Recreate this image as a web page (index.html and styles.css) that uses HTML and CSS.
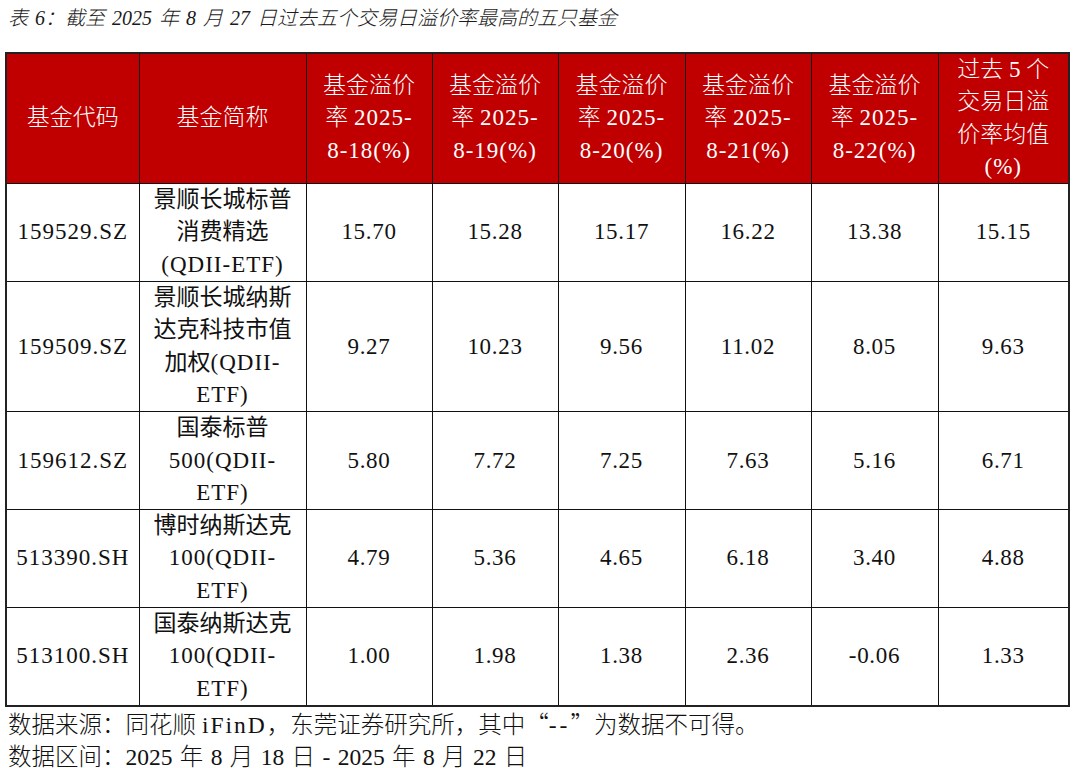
FILE: index.html
```html
<!DOCTYPE html>
<html lang="zh-CN">
<head>
<meta charset="utf-8">
<title>表 6</title>
<link rel="stylesheet" href="styles.css">
</head>
<body>
<div class="page">
  <div class="caption">表 6：截至 2025 年 8 月 27 日过去五个交易日溢价率最高的五只基金</div>
  <table class="fund-table">
    <colgroup>
      <col class="c-code">
      <col class="c-name">
      <col class="c-d1">
      <col class="c-d2">
      <col class="c-d3">
      <col class="c-d4">
      <col class="c-d5">
      <col class="c-avg">
    </colgroup>
    <thead>
      <tr>
        <th>基金代码</th>
        <th>基金简称</th>
        <th>基金溢价<br>率 <span class="lat">2025-</span><br><span class="lat">8-18(%)</span></th>
        <th>基金溢价<br>率 <span class="lat">2025-</span><br><span class="lat">8-19(%)</span></th>
        <th>基金溢价<br>率 <span class="lat">2025-</span><br><span class="lat">8-20(%)</span></th>
        <th>基金溢价<br>率 <span class="lat">2025-</span><br><span class="lat">8-21(%)</span></th>
        <th>基金溢价<br>率 <span class="lat">2025-</span><br><span class="lat">8-22(%)</span></th>
        <th>过去 5 个<br>交易日溢<br>价率均值<br><span class="lat">(%)</span></th>
      </tr>
    </thead>
    <tbody>
      <tr>
        <td class="code">159529.SZ</td>
        <td>景顺长城标普<br>消费精选<br><span class="lat">(QDII-ETF)</span></td>
        <td class="num">15.70</td>
        <td class="num">15.28</td>
        <td class="num">15.17</td>
        <td class="num">16.22</td>
        <td class="num">13.38</td>
        <td class="num">15.15</td>
      </tr>
      <tr>
        <td class="code">159509.SZ</td>
        <td>景顺长城纳斯<br>达克科技市值<br>加权<span class="lat">(QDII-</span><br><span class="lat">ETF)</span></td>
        <td class="num">9.27</td>
        <td class="num">10.23</td>
        <td class="num">9.56</td>
        <td class="num">11.02</td>
        <td class="num">8.05</td>
        <td class="num">9.63</td>
      </tr>
      <tr>
        <td class="code">159612.SZ</td>
        <td>国泰标普<br><span class="lat">500(QDII-</span><br><span class="lat">ETF)</span></td>
        <td class="num">5.80</td>
        <td class="num">7.72</td>
        <td class="num">7.25</td>
        <td class="num">7.63</td>
        <td class="num">5.16</td>
        <td class="num">6.71</td>
      </tr>
      <tr>
        <td class="code">513390.SH</td>
        <td>博时纳斯达克<br><span class="lat">100(QDII-</span><br><span class="lat">ETF)</span></td>
        <td class="num">4.79</td>
        <td class="num">5.36</td>
        <td class="num">4.65</td>
        <td class="num">6.18</td>
        <td class="num">3.40</td>
        <td class="num">4.88</td>
      </tr>
      <tr>
        <td class="code">513100.SH</td>
        <td>国泰纳斯达克<br><span class="lat">100(QDII-</span><br><span class="lat">ETF)</span></td>
        <td class="num">1.00</td>
        <td class="num">1.98</td>
        <td class="num">1.38</td>
        <td class="num">2.36</td>
        <td class="num">-0.06</td>
        <td class="num">1.33</td>
      </tr>
    </tbody>
  </table>
  <div class="notes">
    <p class="note">数据来源：同花顺 <span class="lat-wide">iFinD</span>，东莞证券研究所，其中<span class="ql">“</span><span class="dash">--</span><span class="qr">”</span>为数据不可得。</p>
    <p class="note note-range">数据区间：2025 年 8 月 18 日 - 2025 年 8 月 22 日</p>
  </div>
</div>
</body>
</html>
```

FILE: styles.css
```css
html, body {
  margin: 0;
  padding: 0;
  background: #ffffff;
}

body {
  font-family: "Liberation Serif", "Noto Sans CJK SC", serif;
  color: #111111;
}

.page {
  padding: 4px 0 0 5px;
}

.caption {
  margin: 0 0 20px 3px;
  font-size: 20px;
  line-height: 28px;
  font-style: italic;
  font-weight: 300;
  word-spacing: 2px;
  color: #1a1a1a;
}

.fund-table {
  width: 1063px;
  border-collapse: collapse;
  table-layout: fixed;
  border: 2px solid #222222;
}

.c-code { width: 133px; }
.c-name { width: 167px; }
.c-d1 { width: 126px; }
.c-d2 { width: 126px; }
.c-d3 { width: 127px; }
.c-d4 { width: 126px; }
.c-d5 { width: 127px; }
.c-avg { width: 131px; }

.fund-table th,
.fund-table td {
  border: 1px solid #111111;
  padding: 0 3px;
  text-align: center;
  vertical-align: middle;
  font-size: 23px;
  line-height: 32.3px;
  white-space: nowrap;
}

.fund-table th {
  background: #c00000;
  color: #ffffff;
  font-weight: 300;
}

.fund-table td {
  font-weight: 400;
}

.fund-table .code {
  letter-spacing: 1px;
}

.fund-table .num {
  letter-spacing: 0.7px;
}

.lat {
  letter-spacing: 1px;
}

.lat-wide {
  letter-spacing: 2px;
}

.notes {
  padding-left: 3px;
}

.note {
  margin: 0;
  font-size: 23.5px;
  line-height: 32px;
  font-weight: 300;
  color: #111111;
  white-space: nowrap;
}

.note-range {
  word-spacing: 1.5px;
}

.ql,
.qr {
  display: inline-block;
  width: 1em;
  font-family: "Noto Sans CJK SC", sans-serif;
}

.ql {
  text-align: right;
}

.qr {
  text-align: left;
}

.dash {
  letter-spacing: 3px;
}
```
